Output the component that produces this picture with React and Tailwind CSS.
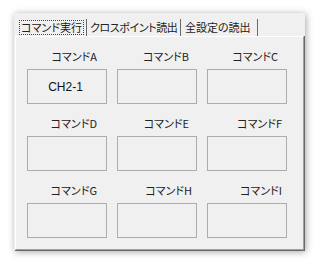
import React from 'react';

const jp = { fontFamily: '"Noto Sans CJK JP", "Noto Sans", sans-serif' };

const commands = [
  { name: 'コマンドA', value: 'CH2-1', pad: 'pr-[10px]' },
  { name: 'コマンドB', value: '', pad: 'pr-[8px]' },
  { name: 'コマンドC', value: '', pad: 'pr-[9px]' },
  { name: 'コマンドD', value: '', pad: 'pr-[10px]' },
  { name: 'コマンドE', value: '', pad: 'pr-[8px]' },
  { name: 'コマンドF', value: '', pad: 'pr-[5px]' },
  { name: 'コマンドG', value: '', pad: 'pr-[10px]' },
  { name: 'コマンドH', value: '', pad: 'pr-[5px]' },
  { name: 'コマンドI', value: '', pad: 'pr-[5px]' },
];

function CommandCell({ cmd }) {
  return (
    <div className="flex flex-col w-[80px]">
      <div
        className={`h-[12px] leading-[12px] text-[11px] text-right text-[#222] whitespace-nowrap [font-feature-settings:'palt'] ${cmd.pad}`}
        style={jp}
      >
        {cmd.name}
      </div>
      <div className="mt-[7px] h-[35px] border border-[#adadad] bg-[#f0f0f0] flex items-center justify-center">
        <span className="text-[12px] text-[#111] -ml-[3px]" style={{ fontFamily: '"Liberation Sans", Arial, sans-serif' }}>
          {cmd.value}
        </span>
      </div>
    </div>
  );
}

export default function App() {
  return (
    <div className="w-[321px] h-[266px] bg-white overflow-hidden">
      <div className="ml-[14px] pt-[13px]">
        <div className="w-[291px] h-[238px] bg-[#f0f0f0] shadow-[1px_1px_7px_rgba(0,0,0,0.35)] flex flex-col">
          {/* tab strip */}
          <div
            className="h-[23px] flex items-end pl-[3px] text-[11px] text-[#222] whitespace-nowrap [font-feature-settings:'palt']"
            style={jp}
          >
            <div className="w-[70px] shrink-0 h-[17px] border-r border-[#696969] flex items-center">
              <div className="ml-[2px] h-[15px] w-[65px] border border-dotted border-[#444] flex items-center justify-center leading-none">
                コマンド実行
              </div>
            </div>
            <div className="w-[94px] shrink-0 h-[17px] border-r border-[#696969] flex items-center pl-[3px] leading-none tracking-[-0.4px]">
              クロスポイント読出
            </div>
            <div className="w-[77px] shrink-0 h-[17px] border-r border-[#696969] flex items-center pl-[4px] leading-none">
              全設定の読出
            </div>
          </div>
          {/* content */}
          <div className="flex-1 ml-[1px] border-r border-b border-[#696969]">
            <div className="h-full border-l border-t border-white border-r border-b border-r-[#a0a0a0] border-b-[#a0a0a0]">
              <div className="pl-[11px] pt-[13px] grid grid-cols-[80px_80px_80px] gap-x-[10px] gap-y-[13px]">
                {commands.map((c) => (
                  <CommandCell key={c.name} cmd={c} />
                ))}
              </div>
            </div>
          </div>
        </div>
      </div>
    </div>
  );
}
